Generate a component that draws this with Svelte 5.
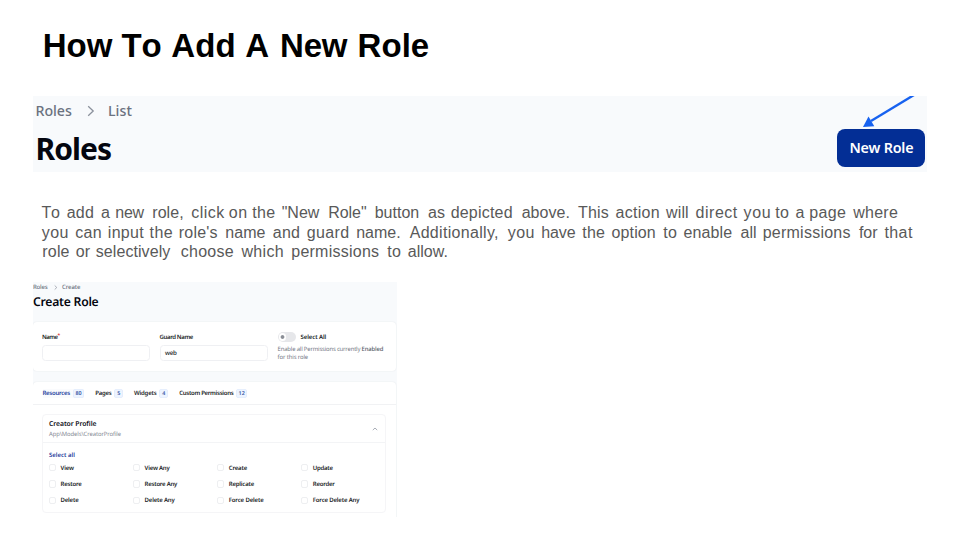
<script>
  // Spreads the letters of a label so that it takes the given width.
  function fit(node, width) {
    const natural = node.getBoundingClientRect().width;
    node.style.letterSpacing = (width - natural) / node.textContent.length + 'px';
  }

  // Each word: text, left edge, right edge.
  const title = [['How', 44.3, 110.7], ['To', 123, 162.7], ['Add', 173, 234], ['A', 247, 269.7], ['New', 281.7, 345.7], ['Role', 359.3, 427.7]];

  const lines = [
    [['To', 42.2, 60.7], ['add', 67.5, 93.3], ['a', 101.7, 109.8], ['new', 116, 143.3], ['role,', 153, 183], ['click', 192, 224], ['on', 229.5, 247], ['the', 253, 275], ['"New', 282.5, 318.7], ['Role"', 329, 366], ['button', 375.5, 418.7], ['as', 428.9, 444.3], ['depicted', 451.5, 512.3], ['above.', 522.5, 569.5], ['This', 579, 608.3], ['action', 616.5, 659.3], ['will', 667, 688.3], ['direct', 696.5, 737.3], ['you', 744.5, 771], ['to', 776.3, 788.7], ['a', 796.5, 804.5], ['page', 810.3, 845.7], ['where', 854.3, 897.7]],
    [['you', 42.4, 68.3], ['can', 75.9, 101.3], ['input', 108.6, 143.3], ['the', 150.3, 172.3], ["role's", 179.6, 217], ['name', 226, 265], ['and', 273.5, 299.7], ['guard', 307.5, 349], ['name.', 357, 400], ['Additionally,', 410.5, 498.3], ['you', 508.6, 534.3], ['have', 542, 575], ['the', 583.2, 604.7], ['option', 612.5, 655.3], ['to', 664.2, 676.7], ['enable', 684.5, 731.7], ['all', 741.5, 756.3], ['permissions', 763.6, 850.3], ['for', 860, 877], ['that', 885.5, 912.3]],
    [['role', 43, 69], ['or', 76.5, 89.3], ['selectively', 96.5, 169.7], ['choose', 181.5, 233.3], ['which', 242.2, 283.3], ['permissions', 292, 378.7], ['to', 388, 400.7], ['allow.', 408.5, 447.3]]
  ];

  const tabs = [
    { label: 'Resources', width: 27.5, count: 80, pill: 11.5, active: true },
    { label: 'Pages', width: 16.2, count: 5, pill: 9 },
    { label: 'Widgets', width: 22.4, count: 4, pill: 9 },
    { label: 'Custom Permissions', width: 54.2, count: 12, pill: 11 }
  ];

  const permissions = [
    ['View', 13.5], ['View Any', 25], ['Create', 18.5], ['Update', 20],
    ['Restore', 21], ['Restore Any', 32.5], ['Replicate', 25.5], ['Reorder', 22],
    ['Delete', 18], ['Delete Any', 30], ['Force Delete', 35], ['Force Delete Any', 46.5]
  ];
</script>

{#snippet words(list, bearing)}
  {#each list as [text, left, right], i}
    <span class="word" style:margin-left="{left - (i ? list[i - 1][2] : 0) - (i ? bearing * 2 : bearing)}px" style:width="{right - left + bearing * 2}px"><span use:fit={right - left + bearing * 2}>{text}</span></span>
  {/each}
{/snippet}

<main class="slide">
  <h1>{@render words(title, 1.6)}</h1>

  <section class="banner">
    <div>
      <nav class="crumbs">
        <span use:fit={36.3}>Roles</span>
        <svg width="8" height="12" viewBox="0 0 8 12"><path d="M1.2 1.2 6.2 6 1.2 10.8" /></svg>
        <span use:fit={24}>List</span>
      </nav>
      <h2><span use:fit={75.5}>Roles</span></h2>
    </div>
    <button class="new"><span use:fit={64}>New Role</span></button>
    <svg class="arrow" width="60" height="34" viewBox="0 0 60 34">
      <path d="M54-1 11 25" stroke="#1762f0" stroke-width="2.4" />
      <path d="M3 31 8.5 20.5 14.3 30.2Z" fill="#1762f0" />
    </svg>
  </section>

  <div class="copy">
    {#each lines as line}
      <p>{@render words(line, 0.7)}</p>
    {/each}
  </div>

  <section class="panel">
    <nav class="crumbs small">
      <span use:fit={14.5}>Roles</span>
      <svg width="4" height="5" viewBox="0 0 4 5"><path d="M.7.5 2.8 2.5.7 4.5" /></svg>
      <span use:fit={18.5}>Create</span>
    </nav>
    <h3><span use:fit={65.5}>Create Role</span></h3>

    <div class="card form">
      <div class="field">
        <label for="name"><span use:fit={15.5}>Name</span><i>*</i></label>
        <div class="input" id="name"></div>
      </div>
      <div class="field">
        <label for="guard"><span use:fit={33.5}>Guard Name</span></label>
        <div class="input" id="guard"><span use:fit={11.5}>web</span></div>
      </div>
      <div class="all">
        <div class="switch-row">
          <span class="switch"><span class="knob"></span></span>
          <b><span use:fit={25.5}>Select All</span></b>
        </div>
        <p><span use:fit={82.7}>Enable all Permissions currently</span><strong use:fit={21.8}>Enabled</strong></p>
        <p><span use:fit={30.5}>for this role</span></p>
      </div>
    </div>

    <div class="card resources">
      <div class="tabs">
        {#each tabs as tab}
          <div class="tab" class:active={tab.active}>
            <span use:fit={tab.width}>{tab.label}</span>
            <span class="pill" style:width="{tab.pill}px">{tab.count}</span>
          </div>
        {/each}
      </div>
      <div class="profile">
        <header>
          <div>
            <h4><span use:fit={47.5}>Creator Profile</span></h4>
            <small><span use:fit={72}>App\Models\CreatorProfile</span></small>
          </div>
          <svg width="6" height="4" viewBox="0 0 6 4"><path d="M.8 3.1 3 1 5.2 3.1" /></svg>
        </header>
        <div class="select"><span use:fit={26}>Select all</span></div>
        <div class="grid">
          {#each permissions as [label, width]}
            <div class="option"><span class="box"></span><span use:fit={width}>{label}</span></div>
          {/each}
        </div>
      </div>
    </div>
  </section>
</main>

<style>
  :global(body) { background: #fff; }
  * { box-sizing: border-box; }
  h1, h2, h3, h4, p { margin: 0; }
  span { white-space: nowrap; }
  svg { display: block; flex: none; overflow: visible; fill: none; }
  .slide {
    width: 960px; height: 540px; overflow: hidden; background: #fff;
    font-family: "Noto Sans", sans-serif;
    display: flex; flex-direction: column;
  }
  .word { flex: none; }
  h1 {
    display: flex; height: 96px; padding-top: 27px; color: #000;
    font: 700 33px/38px "Liberation Sans", Arial, sans-serif;
  }
  .banner {
    position: relative; width: 894px; height: 75.5px; margin-left: 33px; padding-left: 2.5px;
    display: flex; justify-content: space-between; background: #f8fafc;
  }
  .crumbs {
    display: flex; align-items: center; padding-top: 5px;
    font-size: 14.2px; line-height: 20px; font-weight: 500; color: #6b7280;
  }
  .crumbs svg { margin: 0 13.2px 0 15px; stroke: #8b919c; stroke-width: 1.3; }
  h2 { font-size: 30px; line-height: 36px; font-weight: 700; color: #04060f; margin-top: 10px; }
  .new {
    width: 88px; height: 38px; margin: 33.3px 1.6px 0 0; padding: 0; border: 0; border-radius: 8px;
    background: #032e95; color: #fff; font: 600 14.3px/38px "Noto Sans", sans-serif;
  }
  .arrow { position: absolute; left: 827px; top: 0; overflow: hidden; }
  .copy {
    height: 110.5px; padding-top: 31.5px; color: #595959;
    font: 16px/19.5px "Liberation Sans", Arial, sans-serif;
  }
  .copy p { display: flex; height: 19.5px; }

  .panel {
    width: 364px; height: 235px; margin-left: 33px; overflow: hidden; background: #f8fafc;
    font-size: 6px; color: #1a1d26; text-rendering: geometricPrecision;
  }
  .small { font-size: 6px; line-height: 9px; padding-top: .8px; }
  .small svg { margin: 0 4.5px 0 6px; stroke-width: .7; }
  h3 { font-size: 12.2px; line-height: 16px; font-weight: 600; color: #04060f; margin-top: 2.5px; }
  .card { width: 363px; background: #fff; border-radius: 4px; box-shadow: 0 0 1.5px #dfe2e6; }
  .form { display: flex; gap: 9.5px; height: 49px; margin-top: 11.7px; padding: 10px 9px 0; }
  .field { width: 108px; flex: none; font-weight: 600; }
  label { display: flex; line-height: 10px; }
  label i { color: #dc2626; font-style: normal; font-size: 5px; line-height: 8px; }
  .input {
    height: 16px; margin-top: 2.6px; padding-left: 4.5px; border: 1px solid #eff0f3; border-radius: 3.5px;
    line-height: 14px; font-size: 6.2px; font-weight: 500;
  }
  .all { color: #737985; padding-left: .6px; }
  .all p { display: flex; gap: 1.3px; line-height: 8.3px; font-size: 5.9px; }
  .all strong { font-weight: 500; color: #555b68; }
  .all b { font-weight: 600; color: #1a1d26; }
  .switch-row { display: flex; align-items: center; gap: 5px; height: 10px; margin-bottom: 3px; }
  .switch { width: 18px; height: 9.5px; padding: 1px; border-radius: 5px; background: #e6e7ea; }
  .knob {
    display: block; width: 7.5px; height: 7.5px; border-radius: 50%;
    background: radial-gradient(circle, #8a8e96 1.4px, #fff 2.3px);
  }
  .resources { height: 150px; margin-top: 11px; }
  .tabs {
    display: flex; align-items: center; gap: 10.9px; height: 23px; padding: .8px 0 0 9.5px;
    border-bottom: 1px solid #f1f2f4; font-weight: 600;
  }
  .tab { display: flex; align-items: center; gap: 2.8px; line-height: 9px; }
  .active { color: #2744a0; background: #fafbfd; }
  .pill {
    height: 9px; border-radius: 3px; background: #edf4ff; box-shadow: inset 0 0 0 .6px #dfe9fb;
    color: #3755a4; font-size: 5.4px; line-height: 9px; text-align: center;
  }
  .profile {
    width: 344px; height: 99px; margin: 9px 0 0 9px;
    border: 1px solid #f5f5f7; border-radius: 4px;
  }
  header {
    display: flex; justify-content: space-between; align-items: center;
    height: 28px; padding: .8px 7.5px 0 6px; border-bottom: 1px solid #f3f4f6;
  }
  header svg { stroke: #9298a3; stroke-width: .8; }
  h4 { font-size: 6.8px; line-height: 10.5px; font-weight: 600; color: #0c0e16; }
  small { display: block; font-size: 5.9px; line-height: 10px; color: #858a94; }
  .select { padding: 6.8px 0 0 6px; line-height: 10px; font-weight: 600; color: #1f3c9c; }
  .grid {
    display: grid; grid-template-columns: repeat(4, 84.1px); grid-auto-rows: 16.4px;
    margin-top: -.4px; padding-left: 5.5px; font-weight: 600;
  }
  .option { display: flex; align-items: center; gap: 4.5px; line-height: 10px; }
  .box { width: 7.5px; height: 7.5px; border: 1px solid #eeeff1; border-radius: 2px; }
</style>
